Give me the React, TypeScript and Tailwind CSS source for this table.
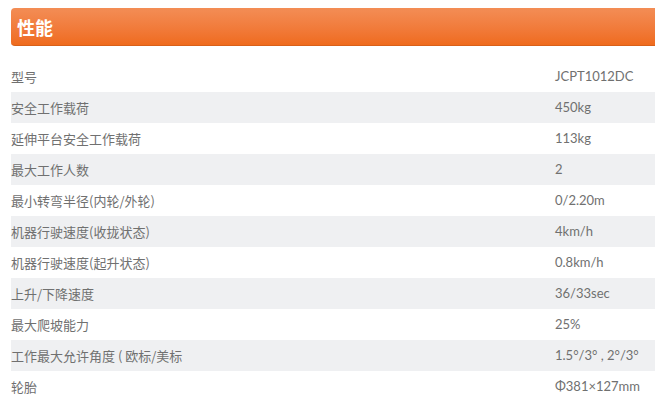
const specs: [string, string][] = [
  ["型号", "JCPT1012DC"],
  ["安全工作载荷", "450kg"],
  ["延伸平台安全工作载荷", "113kg"],
  ["最大工作人数", "2"],
  ["最小转弯半径(内轮/外轮)", "0/2.20m"],
  ["机器行驶速度(收拢状态)", "4km/h"],
  ["机器行驶速度(起升状态)", "0.8km/h"],
  ["上升/下降速度", "36/33sec"],
  ["最大爬坡能力", "25%"],
  ["工作最大允许角度 ( 欧标/美标", "1.5°/3° , 2°/3°"],
  ["轮胎", "Φ381×127mm"],
]

export default function App() {
  return (
    <div
      className="w-[655px] h-[417px] overflow-hidden bg-white pl-[11px] pt-[8px]"
      style={{ fontFamily: '"Noto Sans CJK SC", sans-serif' }}
    >
      <div className="h-[38px] flex items-center pl-[6px] rounded-l-[4px] bg-gradient-to-b from-[#f38d55] to-[#ef6b1c] border-b border-[#d86019]">
        <h2 className="text-[18px] font-bold text-white leading-none">性能</h2>
      </div>

      <div className="mt-[15px]">
        {specs.map(([label, value], i) => (
          <div
            key={label}
            className={`flex h-[31px] items-center text-[13px] text-[#707070] ${i % 2 === 1 ? "bg-[#eff0f2]" : ""}`}
          >
            <span className="w-[544px] shrink-0 whitespace-pre">{label}</span>
            <span className="whitespace-pre" style={{ fontFamily: 'Lato, "Noto Sans CJK SC", sans-serif' }}>{value}</span>
          </div>
        ))}
      </div>
    </div>
  )
}
